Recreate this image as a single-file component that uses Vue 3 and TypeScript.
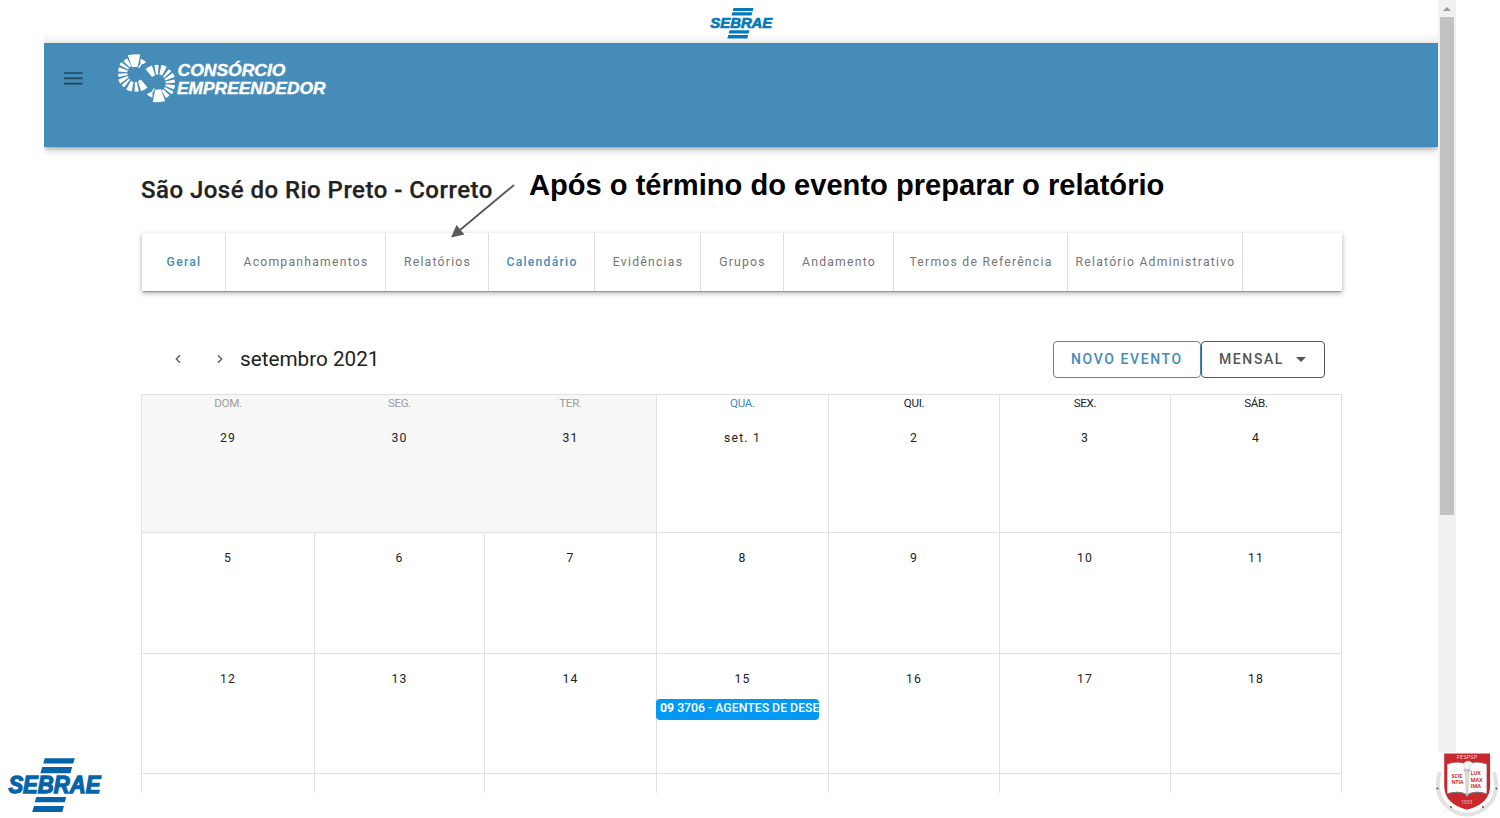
<script setup lang="ts">
interface Tab { label: string; width: number; active?: boolean }
interface Day { label: string; name?: string; past?: boolean; today?: boolean; event?: { time: string; title: string } }

const tabs: Tab[] = [
  { label: 'Geral', width: 84, active: true },
  { label: 'Acompanhamentos', width: 160 },
  { label: 'Relatórios', width: 103 },
  { label: 'Calendário', width: 106, active: true },
  { label: 'Evidências', width: 106 },
  { label: 'Grupos', width: 83 },
  { label: 'Andamento', width: 110 },
  { label: 'Termos de Referência', width: 174 },
  { label: 'Relatório Administrativo', width: 175 },
]

const weeks: Day[][] = [
  [
    { label: '29', name: 'DOM.', past: true },
    { label: '30', name: 'SEG.', past: true },
    { label: '31', name: 'TER.', past: true },
    { label: 'set. 1', name: 'QUA.', today: true },
    { label: '2', name: 'QUI.' },
    { label: '3', name: 'SEX.' },
    { label: '4', name: 'SÁB.' },
  ],
  ['5', '6', '7', '8', '9', '10', '11'].map((label) => ({ label })),
  ['12', '13', '14', '15', '16', '17', '18'].map((label) =>
    label === '15' ? { label, event: { time: '09', title: '3706 - AGENTES DE DESE' } } : { label },
  ),
  Array.from({ length: 7 }, () => ({ label: '' })),
]

interface Petal { a: number; inner: number; outer: number; wi: number; wo: number }
const petals: Petal[] = [
  { a: -4, inner: 6, outer: 18.2, wi: 2.9, wo: 6.2 },
  { a: 33, inner: 6, outer: 12, wi: 0.6, wo: 0.8 },
  { a: 33, inner: 11.5, outer: 15, wi: 1.6, wo: 3.2 },
  { a: -37, inner: 8, outer: 16.5, wi: 0.9, wo: 2.3 },
  { a: -58, inner: 8, outer: 17.5, wi: 0.8, wo: 1.6 },
  { a: -78, inner: 8, outer: 17, wi: 0.9, wo: 2.2 },
  { a: -98, inner: 8, outer: 17, wi: 0.8, wo: 1.6 },
  { a: -118, inner: 8, outer: 18, wi: 0.9, wo: 2.2 },
  { a: -137, inner: 8.5, outer: 18, wi: 0.8, wo: 1.7 },
  { a: -160, inner: 9, outer: 18.5, wi: 1.4, wo: 2.9 },
  { a: 176, inner: 9, outer: 18.5, wi: 1, wo: 2.1 },
  { a: 151, inner: 8.5, outer: 18.5, wi: 1.7, wo: 3.7 },
]
const petalPath = (p: Petal): string =>
  `M${-p.wi} ${-p.inner}L${-p.wo} ${-p.outer}Q0 ${-p.outer - 0.8} ${p.wo} ${-p.outer}L${p.wi} ${-p.inner}Z`
const rings = ['translate(18.3 21)', 'translate(40.7 31.5) rotate(180)']
</script>

<template>
  <div class="slide">
    <div class="browser">
      <div class="page">
        <div class="brandbar">
          <svg class="sebrae-small" viewBox="0 0 63 31">
            <g fill="#0679b8">
              <path d="M23.5 0h20l-.7 3H22.8zM22.3 4.2h20l-.8 3.4H21.5zM19.5 22.2h20l-.8 3.2H18.7zM18.2 27h20l-.8 3.4H17.4z" />
              <text x="0.3" y="20" textLength="62" lengthAdjust="spacingAndGlyphs" class="sebrae-word">SEBRAE</text>
            </g>
          </svg>
        </div>
        <header class="appbar">
          <svg class="menu" viewBox="0 0 20 14"><path d="M0 1h18.5M0 6.3h18.5M0 11.6h18.5" stroke="#1f4359" stroke-width="1.7" /></svg>
          <svg class="logo" viewBox="0 0 212 52">
            <g fill="#fff">
              <g v-for="r in rings" :key="r" :transform="r">
                <path v-for="(p, i) in petals" :key="i" :d="petalPath(p)" :transform="`rotate(${p.a})`" />
              </g>
              <text x="60.5" y="24.3" textLength="108" lengthAdjust="spacingAndGlyphs" class="logo-word">CONSÓRCIO</text>
              <text x="60" y="41.8" textLength="148.5" lengthAdjust="spacingAndGlyphs" class="logo-word">EMPREENDEDOR</text>
            </g>
          </svg>
        </header>
        <main class="content">
          <h1 class="title">São José do Rio Preto - Correto</h1>
          <nav class="tabs">
            <div v-for="t in tabs" :key="t.label" class="tab" :class="{ active: t.active }" :style="{ width: t.width + 'px' }">{{ t.label }}</div>
          </nav>
          <div class="toolbar">
            <svg class="chev" viewBox="0 0 6 10"><path d="M5 1.2L1.3 5L5 8.8" /></svg>
            <svg class="chev next" viewBox="0 0 6 10"><path d="M1 1.2L4.7 5L1 8.8" /></svg>
            <span class="month">setembro 2021</span>
            <span class="btn new">NOVO EVENTO</span>
            <span class="btn mode">MENSAL<i class="caret"></i></span>
          </div>
          <section class="calendar">
            <div v-for="(week, w) in weeks" :key="w" class="week">
              <div v-for="(d, i) in week" :key="i" class="day" :class="{ past: d.past, today: d.today }">
                <div v-if="d.name" class="dow">{{ d.name }}</div>
                <div class="num">{{ d.label }}</div>
                <div v-if="d.event" class="event"><b>{{ d.event.time }}</b> {{ d.event.title }}</div>
              </div>
            </div>
          </section>
        </main>
      </div>
      <div class="scrollbar"><i class="up"></i><div class="thumb"></div></div>
    </div>

    <div class="note">Após o término do evento preparar o relatório</div>
    <svg class="arrow" viewBox="0 0 70 60">
      <path d="M66 5L12 50" stroke="#595959" stroke-width="1.9" />
      <path d="M3 57.5L8.5 45L16.5 54.5Z" fill="#595959" />
    </svg>
    <svg class="sebrae-large" viewBox="0 0 94 54">
      <g fill="#0563a9">
        <path d="M36.8 .3h30l-1.6 5.2H35.2zM34.2 9h30l-1.8 6.3H32.4zM28.3 39h30l-1.6 5.3H26.7zM26 48h30l-1.8 6H24.2z" />
        <text x="0.4" y="35" textLength="92" lengthAdjust="spacingAndGlyphs" class="sebrae-word">SEBRAE</text>
      </g>
    </svg>
    <svg class="crest" viewBox="0 0 64 66">
      <path d="M4 20Q-2 39 8 51Q18 62.5 31 62.5Q44 62.5 54 51Q64 39 58 20" fill="none" stroke="#e2e2e2" stroke-width="4" />
      <path d="M7.5 0.8H54.8V34C54.8 46 48 54 31 58.5C14 54 7.5 46 7.5 34Z" fill="#c9282d" stroke="#fff" stroke-width="1.4" />
      <path d="M11 12Q23 8 31 12.5Q39 8 51 12V42Q39 38 31 43Q23 38 11 42Z" fill="#fff" stroke="#a33a3e" stroke-width="0.7" />
      <path d="M11 42Q23 38 31 43Q39 38 51 42" fill="none" stroke="#777" stroke-width="1.1" />
      <path d="M29.5 18H32.6L31.7 44H30.4ZM28 17H34V19H28Z" fill="#e4e4e4" stroke="#aaa" stroke-width="0.6" />
      <path d="M30 17Q24 11 32 9Q38 10 35 13Q34 16 33 17Z" fill="#f4f4f4" stroke="#ccc" stroke-width="0.5" />
      <g fill="#c9282d" class="crest-text">
        <text x="15.4" y="26" textLength="10.6" lengthAdjust="spacingAndGlyphs">SCIE</text>
        <text x="15.4" y="32.3" textLength="12.2" lengthAdjust="spacingAndGlyphs">NTIA</text>
        <text x="34.6" y="22.7" textLength="10.2" lengthAdjust="spacingAndGlyphs">LUX</text>
        <text x="34.6" y="29.5" textLength="12" lengthAdjust="spacingAndGlyphs">MAX</text>
        <text x="34.6" y="36" textLength="10.4" lengthAdjust="spacingAndGlyphs">IMA</text>
      </g>
      <g fill="#f6d4d5" class="crest-name"><text x="20.5" y="7.3" textLength="21" lengthAdjust="spacingAndGlyphs">FESPSP</text><text x="25.2" y="52.4" textLength="11" lengthAdjust="spacingAndGlyphs">1933</text></g>
      <g fill="#555"><circle cx="1.5" cy="36.5" r="1" /><circle cx="60.5" cy="36.5" r="1" /><circle cx="15" cy="55" r="1" /><circle cx="47" cy="55" r="1" /></g>
    </svg>
  </div>
</template>

<style>
body { margin: 0; background: #fff; overflow: hidden; }
</style>

<style scoped>
.slide { position: relative; width: 1500px; height: 818px; overflow: hidden; background: #fff; font-family: Roboto, sans-serif; box-sizing: border-box; padding-left: 44px; }
.slide * { box-sizing: border-box; }
.browser { display: flex; width: 1412px; height: 793px; overflow: hidden; }
.page { width: 1394.4px; flex: none; height: 793px; overflow: hidden; }
.brandbar { height: 43px; padding: 8px 0 0 666px; background: linear-gradient(#fff 75%, #f1f1f1); }
.sebrae-small { display: block; width: 63px; height: 31px; overflow: visible; }
.sebrae-word { font: italic 700 23.4px "Liberation Sans", Arial, sans-serif; }
.sebrae-small .sebrae-word { font-size: 14.5px; stroke: #0679b8; stroke-width: .7px; }
.sebrae-large .sebrae-word { stroke: #0563a9; stroke-width: 1.3px; }
.appbar { display: flex; height: 104px; background: #468cb8; box-shadow: 0 2px 4px -1px rgba(0,0,0,.3), 0 4px 8px rgba(0,0,0,.16); }
.menu { width: 20px; height: 14px; margin: 29px 0 0 20px; }
.logo { width: 212px; height: 52px; margin: 9px 0 0 33px; overflow: visible; }
.logo-word { font: italic 700 16.5px "Liberation Sans", Arial, sans-serif; stroke: #fff; stroke-width: .4px; }
.content { padding: 0 0 0 97px; width: 1298px; }
.title { margin: 0; padding-top: 28px; height: 86px; font-size: 24px; line-height: 30px; font-weight: 500; letter-spacing: .47px; color: #222; -webkit-text-stroke: .25px #222; white-space: nowrap; }
.tabs { display: flex; width: 1200px; height: 58px; margin-left: .5px; padding-left: .5px; background: #fff; box-shadow: 0 2px 1px -1px rgba(0,0,0,.2), 0 2px 5px rgba(0,0,0,.34); }
.tab { flex: none; border-right: 1px solid #ddd; text-align: center; text-indent: 1px; line-height: 58px; font-size: 12.2px; letter-spacing: 1.24px; color: #757575; white-space: nowrap; }
.tab.active { color: #468cb8; font-weight: 500; }
.toolbar { display: flex; height: 103px; padding: 50px 0 0 34px; width: 1201px; }
.chev { width: 6px; height: 10px; margin-top: 13px; fill: none; stroke: #555; stroke-width: 1.3; }
.chev.next { margin-left: 36px; }
.month { margin-left: 17px; margin-right: auto; line-height: 37px; font-size: 20.7px; letter-spacing: 0; color: #222; }
.btn { flex: none; height: 37px; border: 1px solid; border-radius: 4px; font-size: 14px; line-height: 35px; font-weight: 500; letter-spacing: 1.6px; white-space: nowrap; padding-left: 17px; }
.new { width: 148px; color: #468cb8; }
.mode { width: 124px; color: #555; margin-right: 17px; }
.caret { display: inline-block; margin-left: 12px; vertical-align: 2px; border: 5px solid transparent; border-top-color: #555; border-bottom: 0; }
.calendar { width: 1201px; height: 399px; overflow: hidden; border-top: 1px solid #e0e0e0; border-left: 1px solid #e0e0e0; }
.week { display: grid; grid-template-columns: 173px 170px 172px 172px 171px 171px 171px; height: 120px; }
.week:first-child { height: 138px; }
.week:nth-child(2) { height: 121px; }
.day { border-right: 1px solid #e0e0e0; border-bottom: 1px solid #e0e0e0; padding-top: 17px; text-align: center; color: #222; min-width: 0; }
.week:first-child .day { padding-top: 0; }
.dow { height: 35px; line-height: 17px; font-size: 11.6px; letter-spacing: -.3px; }
.num { line-height: 16px; font-size: 12.2px; letter-spacing: 1.2px; }
.past { background: #f7f7f7; border-right-color: #f7f7f7; }
.past:nth-child(3) { border-right-color: #e0e0e0; }
.past .dow { color: #9e9e9e; }
.today .dow { color: #468cb8; }
.event { margin: 12px 9px 0 -1px; height: 21px; padding-left: 4px; line-height: 19px; border-radius: 4px; background: #0298f4; color: #fff; font-size: 12.3px; font-weight: 500; letter-spacing: -.01px; text-align: left; overflow: hidden; white-space: nowrap; }
.scrollbar { width: 17.6px; flex: none; height: 752px; background: #f1f1f1; padding: 7px 2px 0; }
.up { display: block; width: 0; margin: 0 auto; border: 4px solid transparent; border-bottom-color: #999; border-top: 0; }
.thumb { margin-top: 6px; height: 498px; background: #c1c1c1; }
.note { position: absolute; left: 529px; top: 167px; font: 700 29.1px/36px "Liberation Sans", Arial, sans-serif; color: #000; white-space: nowrap; }
.arrow { position: absolute; left: 448px; top: 180px; width: 70px; height: 60px; }
.sebrae-large { position: absolute; left: 8px; top: 758px; width: 94px; height: 54px; overflow: visible; }
.crest { position: absolute; left: 1436px; top: 752px; width: 64px; height: 66px; }
.crest-text { font: 700 6px "Open Sans", sans-serif; }
.crest-name { font: 5.5px "Open Sans", sans-serif; }
</style>
